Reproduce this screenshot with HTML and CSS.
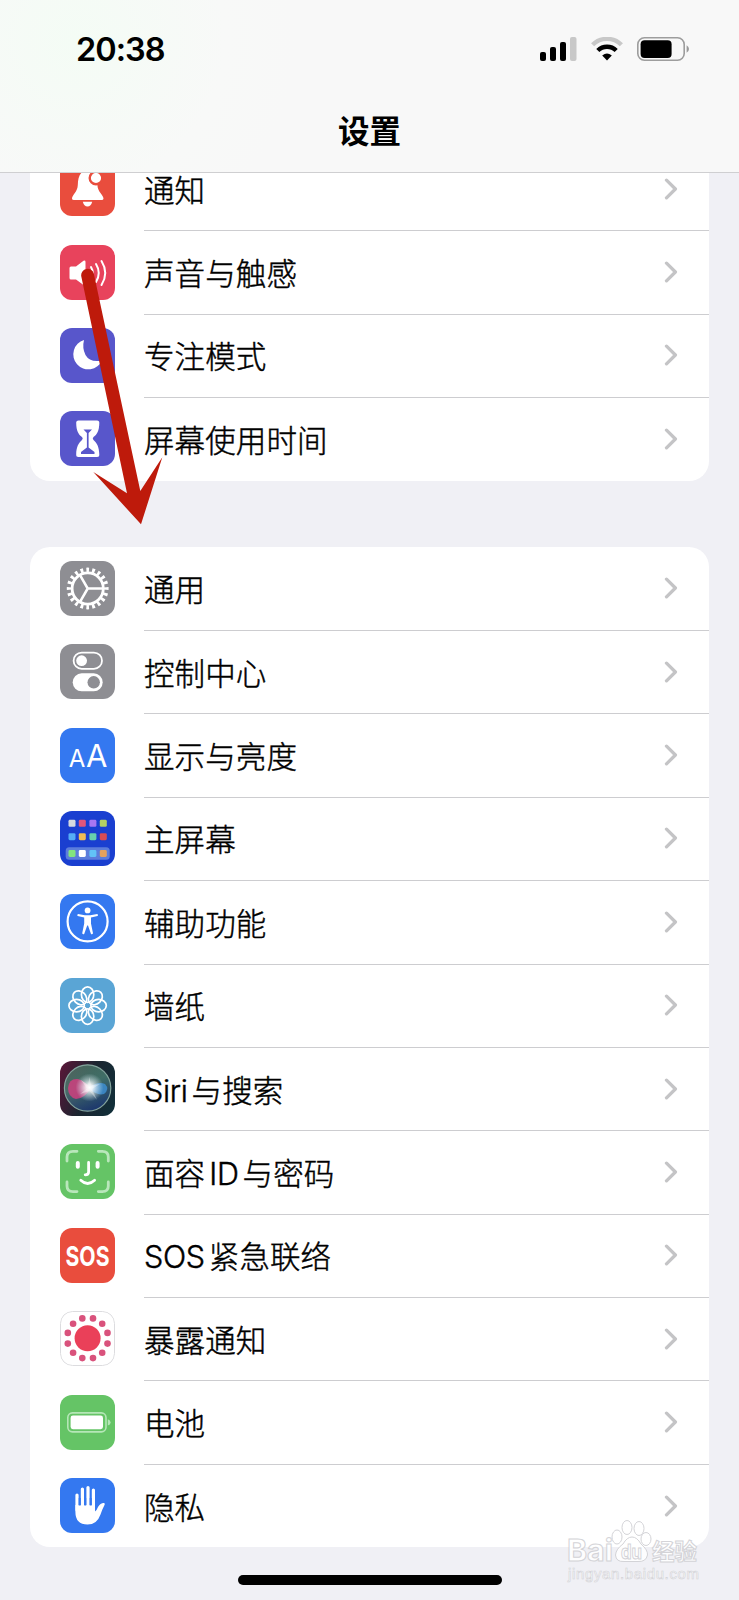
FILE: index.html
```html
<!DOCTYPE html>
<html lang="zh-CN">
<head>
    <meta charset="UTF-8">
    <title>设置</title>
    <link rel="stylesheet" href="styles.css">
</head>
<body>
    <svg class="defs">
        <symbol id="chevron" viewBox="0 0 14 22">
            <path d="M2.5 2.2 L11.4 11 L2.5 19.8" fill="none" stroke="#c4c4c6" stroke-width="3.3" stroke-linecap="round" stroke-linejoin="round"/>
        </symbol>
    </svg>

    <header class="header">
        <div class="status-bar">
            <span class="time">20:38</span>
            <div class="status-icons">
                <svg width="37" height="24" viewBox="0 0 37 24">
                    <rect x="0" y="15" width="6" height="9" rx="2"/>
                    <rect x="10" y="10" width="6" height="14" rx="2"/>
                    <rect x="20" y="5" width="6" height="19" rx="2"/>
                    <rect x="30" y="0" width="6.5" height="24" rx="2" fill="#c8c8c8"/>
                </svg>
                <svg class="wifi" width="32" height="24" viewBox="0 0 32 24" fill="none" stroke-width="4.4">
                    <path d="M1.6 7.8 A20.5 20.5 0 0 1 30.4 7.8" stroke="#c8c8c8"/>
                    <path d="M6.8 13.5 A13 13 0 0 1 25.2 13.5" stroke="#000"/>
                    <path d="M11.2 18.6 Q16 14.6 20.8 18.6 L16 23.6 Z" fill="#000"/>
                </svg>
                <svg class="battery" width="53" height="24" viewBox="0 0 53 24">
                    <rect x=".8" y=".8" width="46.4" height="22.4" rx="6.6" fill="none" stroke="#9d9d9d" stroke-width="1.6"/>
                    <rect x="3.6" y="3.3" width="31" height="17.6" rx="4"/>
                    <path d="M49.6 8.2 Q52 9.6 52 12 Q52 14.4 49.6 15.8 Z" fill="#999"/>
                </svg>
            </div>
        </div>
        <h1>设置</h1>
    </header>

    <main>
        <section class="card card-top">
            <div class="row">
                <svg class="icon red" viewBox="0 0 55 55">
                    <path d="M27.5 9 C20 10 18 16 17.8 24 C17.6 31 12 34 12 37.5 Q12 39 14 39 H41.5 Q43.5 39 43.5 37.5 C43.5 34 37.6 31 37.4 24 C37 15 35 10 27.5 9Z" fill="#fff"/>
                    <path d="M22.8 40.8 H32.2 Q31 45.5 27.5 45.5 Q24 45.5 22.8 40.8Z" fill="#fff"/>
                    <circle cx="36" cy="17" r="6.3" fill="#fff" stroke="#e94d3d" stroke-width="2.4"/>
                </svg>
                <div class="row-body"><span>通知</span><svg class="chevron"><use href="#chevron"/></svg></div>
            </div>
            <div class="row">
                <svg class="icon pink" viewBox="0 0 55 55">
                    <path d="M11 21.5 H16 L23.5 15.8 Q25.5 15 25.5 17 V39 Q25.5 41.5 23.5 40 L16 34.5 H11 Q9.5 34.5 9.5 33 V23 Q9.5 21.5 11 21.5Z" fill="#fff"/>
                    <path d="M31 22 Q34.5 28 31 34 M36 19 Q41.5 28 36 37 M41.5 16 Q49 28 41.5 40" fill="none" stroke="#fff" stroke-width="2" stroke-linecap="round"/>
                </svg>
                <div class="row-body"><span>声音与触感</span><svg class="chevron"><use href="#chevron"/></svg></div>
            </div>
            <div class="row">
                <svg class="icon indigo" viewBox="0 0 55 55">
                    <path d="M24 12 A15 15 0 1 0 42 32.5 Q30 35 25.5 27 Q22 20 24 12Z" fill="#fff"/>
                </svg>
                <div class="row-body"><span>专注模式</span><svg class="chevron"><use href="#chevron"/></svg></div>
            </div>
            <div class="row">
                <svg class="icon indigo" viewBox="0 0 55 55">
                    <path d="M18.5 9.5 H37 Q39.5 9.5 39.3 12 C39.2 20 37 23.5 33.5 26 Q32 27.5 33.5 29 C37 32 39.2 36 39.3 43.5 Q39.5 46 37 46 H18.5 Q16 46 16.2 43.5 C16.3 36 18.5 32 22 29 Q23.5 27.5 22 26 C18.5 23.5 16.3 20 16.2 12 Q16 9.5 18.5 9.5Z" fill="#fff"/>
                    <path d="M23.5 18.5 H32 L28.6 22 V36.5 L34.5 41 V43 H21 V41 L26.9 36.5 V22Z" fill="#5856cb"/>
                </svg>
                <div class="row-body"><span>屏幕使用时间</span><svg class="chevron"><use href="#chevron"/></svg></div>
            </div>
        </section>

        <section class="card">
            <div class="row">
                <svg class="icon gray" viewBox="0 0 55 55" fill="none" stroke="#fff">
                    <circle cx="27.7" cy="27.5" r="18.4" stroke-width="5" pathLength="60" stroke-dasharray="1.4 1.6" stroke-dashoffset=".7"/>
                    <circle cx="27.7" cy="27.5" r="15.6" stroke-width="2.8"/>
                    <path d="M27.7 27.5 H43 M27.7 27.5 L20 14.2 M27.7 27.5 L20 40.8" stroke-width="2.5"/>
                </svg>
                <div class="row-body"><span>通用</span><svg class="chevron"><use href="#chevron"/></svg></div>
            </div>
            <div class="row">
                <svg class="icon gray" viewBox="0 0 55 55">
                    <rect x="13.6" y="8.6" width="28.4" height="16.2" rx="8.1" fill="none" stroke="#fff" stroke-width="1.8"/>
                    <circle cx="21.6" cy="16.7" r="5.4" fill="#fff"/>
                    <rect x="12.7" y="29.3" width="30" height="18" rx="9" fill="#fff"/>
                    <circle cx="33.7" cy="38.3" r="6.2" fill="#8e8e93"/>
                </svg>
                <div class="row-body"><span>控制中心</span><svg class="chevron"><use href="#chevron"/></svg></div>
            </div>
            <div class="row">
                <svg class="icon blue" viewBox="0 0 55 55">
                    <text class="glyph" x="8.8" y="39.2" font-size="24">A</text>
                    <text class="glyph" x="26" y="39.2" font-size="31">A</text>
                </svg>
                <div class="row-body"><span>显示与亮度</span><svg class="chevron"><use href="#chevron"/></svg></div>
            </div>
            <div class="row">
                <svg class="icon navy" viewBox="0 0 55 55">
                    <rect x="5.7" y="36.3" width="44" height="12.4" rx="3.5" fill="#5c7ddb"/>
                    <rect x="8.5" y="8.8" width="7" height="7" rx="1.4" fill="#d5dadf"/>
                    <rect x="18.8" y="8.8" width="7" height="7" rx="1.4" fill="#e0567b"/>
                    <rect x="29.4" y="8.8" width="7" height="7" rx="1.4" fill="#a877f2"/>
                    <rect x="39.8" y="8.8" width="7" height="7" rx="1.4" fill="#b3d063"/>
                    <rect x="8.5" y="22.2" width="7" height="7" rx="1.4" fill="#55adf5"/>
                    <rect x="18.8" y="22.2" width="7" height="7" rx="1.4" fill="#efbd55"/>
                    <rect x="29.4" y="22.2" width="7" height="7" rx="1.4" fill="#68d1ad"/>
                    <rect x="39.8" y="22.2" width="7" height="7" rx="1.4" fill="#d84c55"/>
                    <rect x="8.5" y="39" width="7" height="7" rx="1.4" fill="#83e57e"/>
                    <rect x="18.8" y="39" width="7" height="7" rx="1.4" fill="#fff"/>
                    <rect x="29.4" y="39" width="7" height="7" rx="1.4" fill="#62c3f7"/>
                    <rect x="39.8" y="39" width="7" height="7" rx="1.4" fill="#e5a25c"/>
                </svg>
                <div class="row-body"><span>主屏幕</span><svg class="chevron"><use href="#chevron"/></svg></div>
            </div>
            <div class="row">
                <svg class="icon blue" viewBox="0 0 55 55">
                    <circle cx="27.6" cy="27.4" r="20" fill="none" stroke="#fff" stroke-width="2.2"/>
                    <circle cx="27.6" cy="16.4" r="2.9" fill="#fff"/>
                    <path d="M18 20 L25 21.3 H30.2 L37.3 20 Q38.6 20.8 37.6 22 L31 23.6 V29.5 L33 39.3 Q32.3 41 31 40 L28 31.6 H27.2 L24.2 40 Q22.9 41 22.2 39.3 L24.2 29.5 V23.6 L17.6 22 Q16.7 20.8 18 20Z" fill="#fff"/>
                </svg>
                <div class="row-body"><span>辅助功能</span><svg class="chevron"><use href="#chevron"/></svg></div>
            </div>
            <div class="row">
                <svg class="icon sky" viewBox="0 0 55 55" fill="none" stroke="#fff" stroke-width="1.7">
                    <ellipse cx="27.6" cy="16.6" rx="6.2" ry="7.7"/>
                    <ellipse cx="27.6" cy="16.6" rx="6.2" ry="7.7" transform="rotate(45 27.6 27.6)"/>
                    <ellipse cx="27.6" cy="16.6" rx="6.2" ry="7.7" transform="rotate(90 27.6 27.6)"/>
                    <ellipse cx="27.6" cy="16.6" rx="6.2" ry="7.7" transform="rotate(135 27.6 27.6)"/>
                    <ellipse cx="27.6" cy="16.6" rx="6.2" ry="7.7" transform="rotate(180 27.6 27.6)"/>
                    <ellipse cx="27.6" cy="16.6" rx="6.2" ry="7.7" transform="rotate(225 27.6 27.6)"/>
                    <ellipse cx="27.6" cy="16.6" rx="6.2" ry="7.7" transform="rotate(270 27.6 27.6)"/>
                    <ellipse cx="27.6" cy="16.6" rx="6.2" ry="7.7" transform="rotate(315 27.6 27.6)"/>
                </svg>
                <div class="row-body"><span>墙纸</span><svg class="chevron"><use href="#chevron"/></svg></div>
            </div>
            <div class="row">
                <svg class="icon siri" viewBox="0 0 55 55">
                    <defs>
                        <radialGradient id="glow">
                            <stop offset="0" stop-color="#fff"/>
                            <stop offset=".25" stop-color="#fff" stop-opacity=".85"/>
                            <stop offset="1" stop-color="#cfe8f5" stop-opacity="0"/>
                        </radialGradient>
                        <linearGradient id="orb" x1=".2" y1="0" x2=".6" y2="1">
                            <stop offset="0" stop-color="#4f7a68"/>
                            <stop offset=".45" stop-color="#4d8578"/>
                            <stop offset="1" stop-color="#1d3a80"/>
                        </linearGradient>
                    </defs>
                    <circle cx="27.6" cy="27" r="23.2" fill="url(#orb)" fill-opacity=".75" stroke="#83a39c" stroke-width="1.2"/>
                    <path d="M8 27 Q9 17 18 18 Q24 20 31 27 Q24 38 16 38 Q8 36 8 27Z" fill="#cf3f7f" fill-opacity=".85"/>
                    <path d="M28 27 Q38 20 45 23 Q50 28 44 33 Q37 35 28 27Z" fill="#3f91d6" fill-opacity=".8"/>
                    <ellipse cx="29.5" cy="26.5" rx="14" ry="14" fill="url(#glow)"/>
                    <path d="M29.5 16 L31 24.5 L40 23 L32 28 L37 39 L29.5 30 L20 33 L27 27.5 L21 19 L28 24Z" fill="#fff" fill-opacity=".35"/>
                </svg>
                <div class="row-body"><span><i>Siri</i>与搜索</span><svg class="chevron"><use href="#chevron"/></svg></div>
            </div>
            <div class="row">
                <svg class="icon green" viewBox="0 0 55 55" fill="none" stroke="#fff" stroke-linecap="round">
                    <path d="M7 17 V13 Q7 7.3 13 7.3 H17 M38.3 7.3 H42.3 Q48.3 7.3 48.3 13 V17 M48.3 38 V42 Q48.3 47.6 42.3 47.6 H38.3 M17 47.6 H13 Q7 47.6 7 42 V38" stroke="#b9e7bb" stroke-width="2.8"/>
                    <path d="M17.8 19 V22.8 M37.6 19 V22.8" stroke-width="4"/>
                    <path d="M28.6 18.5 V28 Q28.6 30.8 25.2 30.8" stroke-width="2.8"/>
                    <path d="M20.8 36.3 Q27.6 42.8 34.6 36.3" stroke-width="2.8"/>
                </svg>
                <div class="row-body"><span>面容<i class="mid">ID</i>与密码</span><svg class="chevron"><use href="#chevron"/></svg></div>
            </div>
            <div class="row">
                <svg class="icon red" viewBox="0 0 55 55">
                    <text class="glyph bold" x="5.5" y="37.6" font-size="27" textLength="44" lengthAdjust="spacingAndGlyphs">SOS</text>
                </svg>
                <div class="row-body"><span><i>SOS</i>紧急联络</span><svg class="chevron"><use href="#chevron"/></svg></div>
            </div>
            <div class="row">
                <svg class="icon" viewBox="0 0 55 55">
                    <rect x=".5" y=".5" width="54" height="54" rx="12" fill="#fff" stroke="#dcdcdf"/>
                    <circle cx="27.6" cy="27.3" r="13" fill="#ea4059"/>
                    <g fill="#d9527c">
                        <circle cx="33" cy="7.4" r="3.3"/>
                        <circle cx="42.2" cy="12.7" r="3.3"/>
                        <circle cx="47.5" cy="21.9" r="3.3"/>
                        <circle cx="47.5" cy="32.6" r="3.3"/>
                        <circle cx="42.2" cy="41.8" r="3.3"/>
                        <circle cx="33" cy="47.1" r="3.3"/>
                        <circle cx="22.3" cy="47.1" r="3.3"/>
                        <circle cx="13.1" cy="41.8" r="3.3"/>
                        <circle cx="7.8" cy="32.6" r="3.3"/>
                        <circle cx="7.8" cy="21.9" r="3.3"/>
                        <circle cx="13.1" cy="12.7" r="3.3"/>
                        <circle cx="22.3" cy="7.4" r="3.3"/>
                    </g>
                </svg>
                <div class="row-body"><span>暴露通知</span><svg class="chevron"><use href="#chevron"/></svg></div>
            </div>
            <div class="row">
                <svg class="icon green" viewBox="0 0 55 55">
                    <rect x="7.8" y="17.9" width="38.2" height="19" rx="4.6" fill="none" stroke="#b5e6b7" stroke-width="1.6"/>
                    <rect x="10.6" y="20.6" width="32.4" height="13.6" rx="2.4" fill="#fff"/>
                    <path d="M47.8 24.3 Q50.6 25 50.6 27.4 Q50.6 29.8 47.8 30.5Z" fill="#b5e6b7"/>
                </svg>
                <div class="row-body"><span>电池</span><svg class="chevron"><use href="#chevron"/></svg></div>
            </div>
            <div class="row">
                <svg class="icon blue" viewBox="0 0 55 55">
                    <path d="M17 17 V32 M22.4 11 V28 M28 9.5 V28 M33.4 12 V30" fill="none" stroke="#fff" stroke-width="3.2" stroke-linecap="round"/>
                    <path d="M15.4 27 H35 V33.5 Q36.5 32.8 38 29 Q40.5 24.8 44 25 Q45.4 25.4 44.6 26.8 Q42 32 40.5 36.5 Q37 46.6 27.5 46.6 Q15.4 46.4 15.4 34Z" fill="#fff"/>
                    <path d="M19.7 20 V27.6 M25.2 20 V27.6 M30.7 20 V27.6" stroke="#3478f0" stroke-width="2"/>
                </svg>
                <div class="row-body"><span>隐私</span><svg class="chevron"><use href="#chevron"/></svg></div>
            </div>
        </section>
    </main>

    <!-- pointer towards the General row -->
    <svg class="arrow" width="84" height="260" viewBox="0 0 84 260">
        <path d="M1.2 10 L47 227.3 L13.3 206 L61 258.3 L82.3 191.3 L60.3 225 L13.8 7.5 A6.45 6.45 0 0 0 1.2 10Z" fill="#be1a0b"/>
    </svg>

    <div class="home-indicator"></div>

    <svg class="watermark" width="140" height="70" viewBox="0 0 140 70">
        <g fill="#fff" stroke="#d0d0d4" stroke-width="1">
            <text x="4" y="45" class="wm-main" textLength="46" lengthAdjust="spacingAndGlyphs">Bai</text>
            <ellipse cx="54" cy="21" rx="5" ry="7"/>
            <ellipse cx="64" cy="11.5" rx="5" ry="7"/>
            <ellipse cx="76" cy="12.5" rx="5" ry="7"/>
            <ellipse cx="83" cy="23" rx="5" ry="6.5"/>
            <path d="M69 21 Q74 21 78 28 Q85 34 84.5 39 Q83 46 75 45.5 H61 Q53 46 52.5 39 Q53 33 60 28 Q64 21 69 21Z"/>
            <text x="58" y="42.5" class="wm-du" textLength="21" lengthAdjust="spacingAndGlyphs">du</text>
            <text x="89" y="43.5" class="wm-cn">经验</text>
            <text x="5" y="62.5" class="wm-url" stroke-width=".6" textLength="131">jingyan.baidu.com</text>
        </g>
    </svg>
</body>
</html>
```

FILE: styles.css
```css
* {
    box-sizing: border-box;
}
body {
    margin: 0;
    position: relative;
    height: 1600px;
    overflow: hidden;
    background: #f0f0f5;
    color: #000;
    font-family: Inter, "Noto Sans CJK SC", sans-serif;
}
.defs {
    display: none;
}
.header {
    height: 173px;
    background: radial-gradient(circle at 75px 40px, #f4fcf5 0, #f8f9f8 150px, #f8f8f8 220px);
    border-bottom: 1px solid #cfcfd1;
}
.status-bar {
    display: flex;
    justify-content: space-between;
    align-items: center;
    height: 98px;
    padding: 0 49px 0 76px;
}
.time {
    font-size: 32.5px;
    font-weight: 600;
    letter-spacing: -1px;
}
.status-icons {
    display: flex;
}
.wifi {
    margin-left: 14px;
}
.battery {
    margin-left: 14px;
}
h1 {
    margin: 0;
    height: 67px;
    line-height: 67px;
    text-align: center;
    font-size: 31.5px;
    font-weight: 600;
}
main {
    height: 1427px;
    overflow: hidden;
}
.card {
    width: 679px;
    margin: 0 auto 66px 30px;
    background: #fff;
    border-radius: 20px;
}
.card-top {
    margin-top: -26px;
}
.row {
    display: flex;
    align-items: center;
    height: 83.4px;
    padding-left: 30.4px;
}
.row-body {
    display: flex;
    align-items: center;
    justify-content: space-between;
    flex: 1;
    height: 100%;
    margin-left: 28.6px;
    padding-right: 31px;
    box-shadow: 0 1px 0 #cdcdd0;
    font-size: 30.5px;
    font-weight: 300;
    letter-spacing: 0.1px;
    -webkit-text-stroke: 0.45px #000;
}
.row:last-child .row-body {
    box-shadow: none;
}
.row-body i {
    font-style: normal;
    margin-right: 4px;
    letter-spacing: -0.3px;
}
.row-body .mid {
    margin-left: 4px;
}
.chevron {
    width: 14px;
    height: 22px;
}
.icon {
    width: 55px;
    height: 55px;
    border-radius: 12px;
}
.red { background: #e94d3d; }
.pink { background: #e8435c; }
.indigo { background: #5856cb; }
.gray { background: #8e8e93; }
.blue { background: #3478f0; }
.navy { background: #1a3fd0; }
.sky { background: #5aa5d5; }
.green { background: #65c466; }
.siri { background: linear-gradient(110deg, #5c1638, #1b2530 50%, #10303a); }
.glyph {
    fill: #fff;
    font-family: Inter, sans-serif;
    font-weight: 400;
}
.bold {
    font-weight: 700;
}
.arrow {
    position: absolute;
    left: 80px;
    top: 266px;
}
.home-indicator {
    position: absolute;
    left: 238px;
    top: 1575px;
    width: 264px;
    height: 10px;
    border-radius: 5px;
    background: #000;
}
.watermark {
    position: absolute;
    left: 563px;
    top: 1516px;
    opacity: .9;
}
.wm-main {
    font: 700 30px Inter, sans-serif;
}
.wm-du {
    font: 700 20px Inter, sans-serif;
}
.wm-cn {
    font: 700 22.5px "Noto Sans CJK SC", sans-serif;
}
.wm-url {
    font: 400 15px "Liberation Sans", sans-serif;
}
```
